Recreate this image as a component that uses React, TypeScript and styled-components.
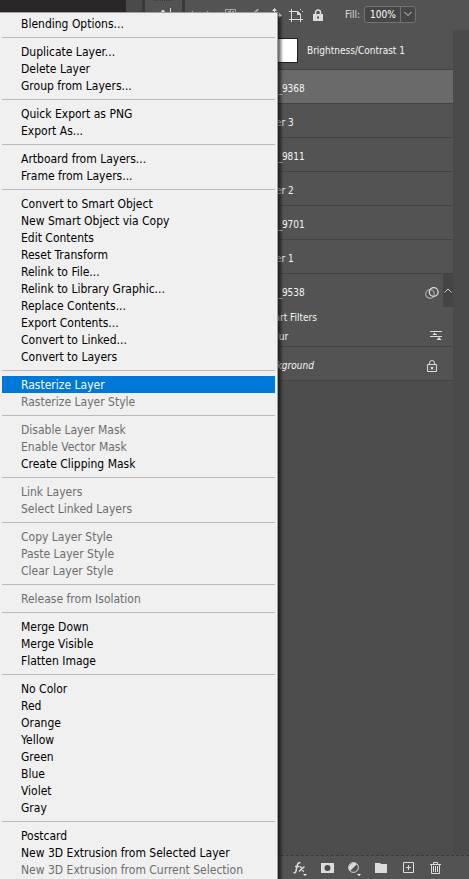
import React from 'react';
import styled, { createGlobalStyle } from 'styled-components';

const GlobalStyle = createGlobalStyle`
  * { box-sizing: border-box; }
  body {
    margin: 0;
    overflow: hidden;
    background: #4c4c4c;
    font-family: "DejaVu Sans Condensed", "DejaVu Sans", sans-serif;
  }
  button { border: 0; margin: 0; padding: 0; background: none; font: inherit; color: inherit; }
`;

const Screen = styled.main`
  position: relative;
  display: flex;
  flex-direction: column;
  height: 100vh;
  overflow: hidden;
  background: #4b4b4b;
  color: #f4f4f4;
  font-size: 10px;
`;

const LockBar = styled.header`
  display: flex;
  flex: none;
  height: 30px;
  background: #535353;
`;

const Canvas = styled.div`
  width: 126px;
  background: #2a2728;
`;

const Dock = styled.div`
  width: 19px;
  background: #4a4a4a;
  border-right: 3px solid #3a3a3a;
`;

const DockGroup = styled.div`
  width: 40px;
  padding: 0 9px;
  border-right: 3px solid #3a3a3a;
  svg { display: block; }
`;

const LockTools = styled.div`
  display: flex;
  flex: 1;
  align-items: center;
  padding-left: 6px;
`;

const LockLabel = styled.span`
  width: 28px;
  color: #d8d8d8;
`;

const IconButton = styled.button<{ $w?: number }>`
  display: flex;
  align-items: center;
  justify-content: center;
  flex: none;
  width: ${p => p.$w ?? 22}px;
  height: 22px;
  color: #dcdcdc;
  svg { display: block; }
`;

const FillField = styled.label`
  display: flex;
  align-items: center;
  gap: 4px;
  margin: 0 53px 2px auto;
  color: #d8d8d8;
`;

const FillBox = styled.span`
  display: flex;
  width: 52px;
  height: 17px;
  border: 1px solid #737373;
  border-radius: 3px;
  background: #464646;
`;

const FillInput = styled.input`
  flex: 1;
  min-width: 0;
  padding: 0 0 0 5px;
  border: 0;
  background: none;
  color: #fff;
  font: inherit;
`;

const FillArrow = styled.button`
  display: flex;
  align-items: center;
  justify-content: center;
  width: 15px;
  border-left: 1px solid #737373;
  color: #d0d0d0;
`;

const Layers = styled.section`
  flex: 1;
  min-height: 0;
  padding-right: 16px;
  background: #4a4a4a;
`;

const LayerList = styled.div`
  height: 100%;
  background: #4d4d4d;
`;

const LayerRow = styled.div<{ $selected?: boolean; $tall?: boolean; $open?: boolean }>`
  display: flex;
  align-items: center;
  height: ${p => (p.$tall ? 40 : 34)}px;
  padding: ${p => (p.$tall ? 2 : 4)}px 0 0 260px;
  background: ${p => (p.$selected ? '#6a6a6a' : '#535353')};
  border-bottom: 1px solid ${p => (p.$open ? '#535353' : '#434343')};
`;

const MaskThumb = styled.span`
  width: 38px;
  height: 25px;
  margin-right: 9px;
  background: #fff;
  border: 1px solid #222;
`;

const LayerName = styled.span<{ $italic?: boolean }>`
  flex: 1;
  white-space: nowrap;
  font-style: ${p => (p.$italic ? 'italic' : 'normal')};
`;

const FilterRow = styled.div<{ $indent: number; $last?: boolean }>`
  display: flex;
  align-items: center;
  height: ${p => (p.$last ? 21 : 18)}px;
  padding-left: ${p => p.$indent}px;
  padding-right: 6px;
  background: #535353;
  border-bottom: ${p => (p.$last ? '1px solid #434343' : '0')};
`;

const Collapse = styled.button`
  display: flex;
  align-items: center;
  justify-content: center;
  align-self: stretch;
  width: 10px;
  margin-top: -4px;
  background: #444;
  color: #d0d0d0;
`;

const BottomBar = styled.footer`
  display: flex;
  flex: none;
  align-items: center;
  justify-content: flex-end;
  gap: 5px;
  height: 24px;
  padding-right: 23px;
  background: #535353;
  border-top: 1px dashed #383838;
`;

const ContextMenu = styled.div`
  position: absolute;
  top: 12px;
  left: 0;
  width: 278px;
  padding: 2px;
  background: #f0f0f0;
  border: solid #a0a0a0;
  border-width: 1px 1px 1px 0;
  box-shadow: 3px 3px 3px rgba(0, 0, 0, 0.6);
  color: #000;
  font-size: 12px;
`;

const MenuItem = styled.button<{ $active?: boolean }>`
  display: block;
  width: 100%;
  height: 17px;
  padding: 1px 0 0 19px;
  line-height: 16px;
  text-align: left;
  white-space: nowrap;
  background: ${p => (p.$active ? '#0078d7' : 'transparent')};
  color: ${p => (p.$active ? '#fff' : '#000')};
  &:disabled { color: #6d6d6d; }
`;

const Separator = styled.hr`
  height: 1px;
  margin: 5px 0;
  border: 0;
  background: #bababa;
`;

type Entry = { label: string; disabled?: boolean; active?: boolean };
const on = (...labels: string[]): Entry[] => labels.map(label => ({ label }));
const off = (...labels: string[]): Entry[] => labels.map(label => ({ label, disabled: true }));

const groups: Entry[][] = [
  on('Blending Options...'),
  on('Duplicate Layer...', 'Delete Layer', 'Group from Layers...'),
  on('Quick Export as PNG', 'Export As...'),
  on('Artboard from Layers...', 'Frame from Layers...'),
  on(
    'Convert to Smart Object', 'New Smart Object via Copy', 'Edit Contents', 'Reset Transform',
    'Relink to File...', 'Relink to Library Graphic...', 'Replace Contents...',
    'Export Contents...', 'Convert to Linked...', 'Convert to Layers',
  ),
  [{ label: 'Rasterize Layer', active: true }, ...off('Rasterize Layer Style')],
  [...off('Disable Layer Mask', 'Enable Vector Mask'), ...on('Create Clipping Mask')],
  off('Link Layers', 'Select Linked Layers'),
  off('Copy Layer Style', 'Paste Layer Style', 'Clear Layer Style'),
  off('Release from Isolation'),
  on('Merge Down', 'Merge Visible', 'Flatten Image'),
  on('No Color', 'Red', 'Orange', 'Yellow', 'Green', 'Blue', 'Violet', 'Gray'),
  [...on('Postcard', 'New 3D Extrusion from Selected Layer'), ...off('New 3D Extrusion from Current Selection')],
];

const ParagraphIcon = () => (
  <svg width="22" height="20" viewBox="0 0 22 20" fill="#ddd">
    <path d="M0 .5h19" stroke="#383838" strokeDasharray="1 1" />
    <circle cx="9" cy="12" r="2" /><path d="M16 8h1v10h-1z" />
  </svg>
);
const PixelsIcon = () => (
  <svg width="13" height="13" viewBox="0 0 13 13" fill="none" stroke="#a8a8a8">
    <path d="M1.5.5h10v11h-10zM1.5 6.5h10M6.5.5v11" /><path d="M4 2h2v3H4zM8 2h2v3H8z" fill="#a8a8a8" stroke="none" />
  </svg>
);
const BrushIcon = () => (
  <svg width="13" height="13" viewBox="0 0 13 13" fill="#a8a8a8">
    <path d="M13 0 8 8 5 6l6-6zM4 7l3 2c-1 3-3 3-6 3 1-1 1-4 3-5z" />
  </svg>
);
const MoveIcon = () => (
  <svg width="15" height="15" viewBox="0 0 15 15" fill="#dcdcdc">
    <path d="M7 2h1v11H7zM2 7h11v1H2zM7.500 0 10 3H5zM7.500 15 5 12h5zM0 7.500 3 5v5zM15 7.500 12 10V5z" />
  </svg>
);
const ArtboardIcon = () => (
  <svg width="14" height="13" viewBox="0 0 14 13" fill="none" stroke="#dcdcdc">
    <path d="M0 2.500h9M2.500 0v13M0 10.500h14M11.500 5v8M11.500 0v1M13 2.500h1" />
    <path d="M8 2h1l3 3v1H8z" fill="#dcdcdc" stroke="none" />
  </svg>
);
const LockIcon = () => (
  <svg width="10" height="12" viewBox="0 0 10 12">
    <path d="M2.500 5V3.500a2.500 2.500 0 0 1 5 0V5" fill="none" stroke="#dcdcdc" strokeWidth="1.500" />
    <path fillRule="evenodd" d="M0 5h10v7H0zM4 7.500h2v2H4z" fill="#dcdcdc" />
  </svg>
);
const LockOutlineIcon = () => (
  <svg width="10" height="12" viewBox="0 0 10 12" fill="none" stroke="#dcdcdc">
    <path d="M2.500 5V3a2.500 2.500 0 0 1 5 0v2M.5 4.500h9v7h-9z" /><path d="M4 7h2v2H4z" fill="#dcdcdc" stroke="none" />
    <path d="M2.500 7h1M6.500 7h1M2.500 9.500h1M4.500 9.500h1M6.500 9.500h1" stroke="#9a9a9a" />
  </svg>
);
const SmartIcon = () => (
  <svg width="14" height="12" viewBox="0 0 14 12" fill="none">
    <circle cx="5" cy="7" r="4.300" stroke="#a8a8a8" strokeWidth="1.200" />
    <circle cx="8.700" cy="5" r="4.400" stroke="#dcdcdc" strokeWidth="1.300" />
  </svg>
);
const SlidersIcon = () => (
  <svg width="12" height="10" viewBox="0 0 12 10" fill="#dcdcdc">
    <path d="M0 0h12v1H0zM0 5h12v1H0zM4.500 1.500 6.500 4h-4zM9 6l2.500 3h-5zM3 3h4v1H3zM7 8h4v1H7z" />
  </svg>
);
const Chevron = ({ up }: { up?: boolean }) => (
  <svg width="8" height="6" viewBox="0 0 8 6" fill="none" stroke="currentColor">
    <path d={up ? 'M.5 4.500 4 1l3.500 3.500' : 'M.5 1 4 4.500 7.500 1'} />
  </svg>
);
const FxIcon = () => (
  <svg width="14" height="18" viewBox="0 0 14 18" fill="#dcdcdc">
    <path d="M7.500 4C5 3 4.500 5 4 7.500L3 12c-.4 1.700-1 2-2.500 1.600M2 7.500h4.500M7 7.500c2 0 1.500 5 4 5M11.500 7.500 6 12.500" fill="none" stroke="#dcdcdc" strokeWidth="1.500" />
    <path d="M10 15h4l-2 2z" fill="#fff" />
  </svg>
);
const MaskIcon = () => (
  <svg width="13" height="10" viewBox="0 0 13 10"><path fill="#dcdcdc" d="M0 0h13v10H0z" /><circle cx="6.500" cy="5" r="3" fill="#4a4a4a" /></svg>
);
const AdjustIcon = () => (
  <svg width="14" height="18" viewBox="0 0 14 18">
    <circle cx="6.500" cy="8.500" r="4.900" fill="none" stroke="#dcdcdc" />
    <path d="M10 5 3 12A5 5 0 0 1 10 5z" fill="#dcdcdc" /><path d="M10 15h4l-2 2z" fill="#fff" />
  </svg>
);
const FolderIcon = () => (
  <svg width="12" height="10" viewBox="0 0 12 10" fill="#dcdcdc"><path d="M0 0h5l1 1h6v1H0zM0 2h12v8H0z" /></svg>
);
const NewIcon = () => (
  <svg width="11" height="11" viewBox="0 0 11 11" fill="none" stroke="#dcdcdc"><path d="M.5.5h10v10H.5zM5.500 3v5M3 5.500h5" /></svg>
);
const TrashIcon = () => (
  <svg width="11" height="12" viewBox="0 0 11 12" fill="none" stroke="#dcdcdc">
    <path d="M0 2.500h11M3.500 2V.5h4V2M1.500 3v8.500h8V3M3.500 4v6M5.500 4v6M7.500 4v6" />
  </svg>
);
const LinkIcon = () => (
  <svg width="12" height="8" viewBox="0 0 12 8" fill="none" stroke="#777"><path d="M7 1.500h1a2.500 2.500 0 0 1 0 5H7M5 1.500H4a2.500 2.500 0 0 0 0 5h1M4 4h4" /></svg>
);

export default function App() {
  return (
    <Screen>
      <GlobalStyle />
      <LockBar>
        <Canvas />
        <Dock />
        <DockGroup><ParagraphIcon /></DockGroup>
        <LockTools>
          <LockLabel>Lock:</LockLabel>
          <IconButton aria-label="Lock transparent pixels"><PixelsIcon /></IconButton>
          <IconButton aria-label="Lock image pixels"><BrushIcon /></IconButton>
          <IconButton aria-label="Lock position"><MoveIcon /></IconButton>
          <IconButton aria-label="Lock artboard nesting"><ArtboardIcon /></IconButton>
          <IconButton aria-label="Lock all"><LockIcon /></IconButton>
          <FillField>
            Fill:
            <FillBox>
              <FillInput defaultValue="100%" />
              <FillArrow aria-label="Fill slider"><Chevron /></FillArrow>
            </FillBox>
          </FillField>
        </LockTools>
      </LockBar>

      <Layers>
        <LayerList>
          <LayerRow $tall><MaskThumb /><LayerName>Brightness/Contrast 1</LayerName></LayerRow>
          <LayerRow $selected><LayerName>IMG_9368</LayerName></LayerRow>
          {['Layer 3', 'IMG_9811', 'Layer 2', 'IMG_9701', 'Layer 1'].map(name => (
            <LayerRow key={name}><LayerName>{name}</LayerName></LayerRow>
          ))}
          <LayerRow $open>
            <LayerName>IMG_9538</LayerName>
            <IconButton aria-label="Smart filter options"><SmartIcon /></IconButton>
            <Collapse aria-label="Collapse filters"><Chevron up /></Collapse>
          </LayerRow>
          <FilterRow $indent={260}><LayerName>Smart Filters</LayerName></FilterRow>
          <FilterRow $indent={226} $last>
            <LayerName>Gaussian Blur</LayerName>
            <IconButton aria-label="Blending options"><SlidersIcon /></IconButton>
          </FilterRow>
          <LayerRow>
            <LayerName $italic>Background</LayerName>
            <IconButton $w={42} aria-label="Unlock"><LockOutlineIcon /></IconButton>
          </LayerRow>
        </LayerList>
      </Layers>

      <BottomBar>
        <IconButton aria-label="Link layers"><LinkIcon /></IconButton>
        <IconButton aria-label="Layer style"><FxIcon /></IconButton>
        <IconButton aria-label="Add mask"><MaskIcon /></IconButton>
        <IconButton aria-label="Adjustment layer"><AdjustIcon /></IconButton>
        <IconButton aria-label="New group"><FolderIcon /></IconButton>
        <IconButton aria-label="New layer"><NewIcon /></IconButton>
        <IconButton aria-label="Delete layer"><TrashIcon /></IconButton>
      </BottomBar>

      <ContextMenu role="menu">
        {groups.map((group, i) => (
          <React.Fragment key={group[0].label}>
            {i > 0 && <Separator />}
            {group.map(item => (
              <MenuItem key={item.label} role="menuitem" disabled={item.disabled} $active={item.active}>
                {item.label}
              </MenuItem>
            ))}
          </React.Fragment>
        ))}
      </ContextMenu>
    </Screen>
  );
}
